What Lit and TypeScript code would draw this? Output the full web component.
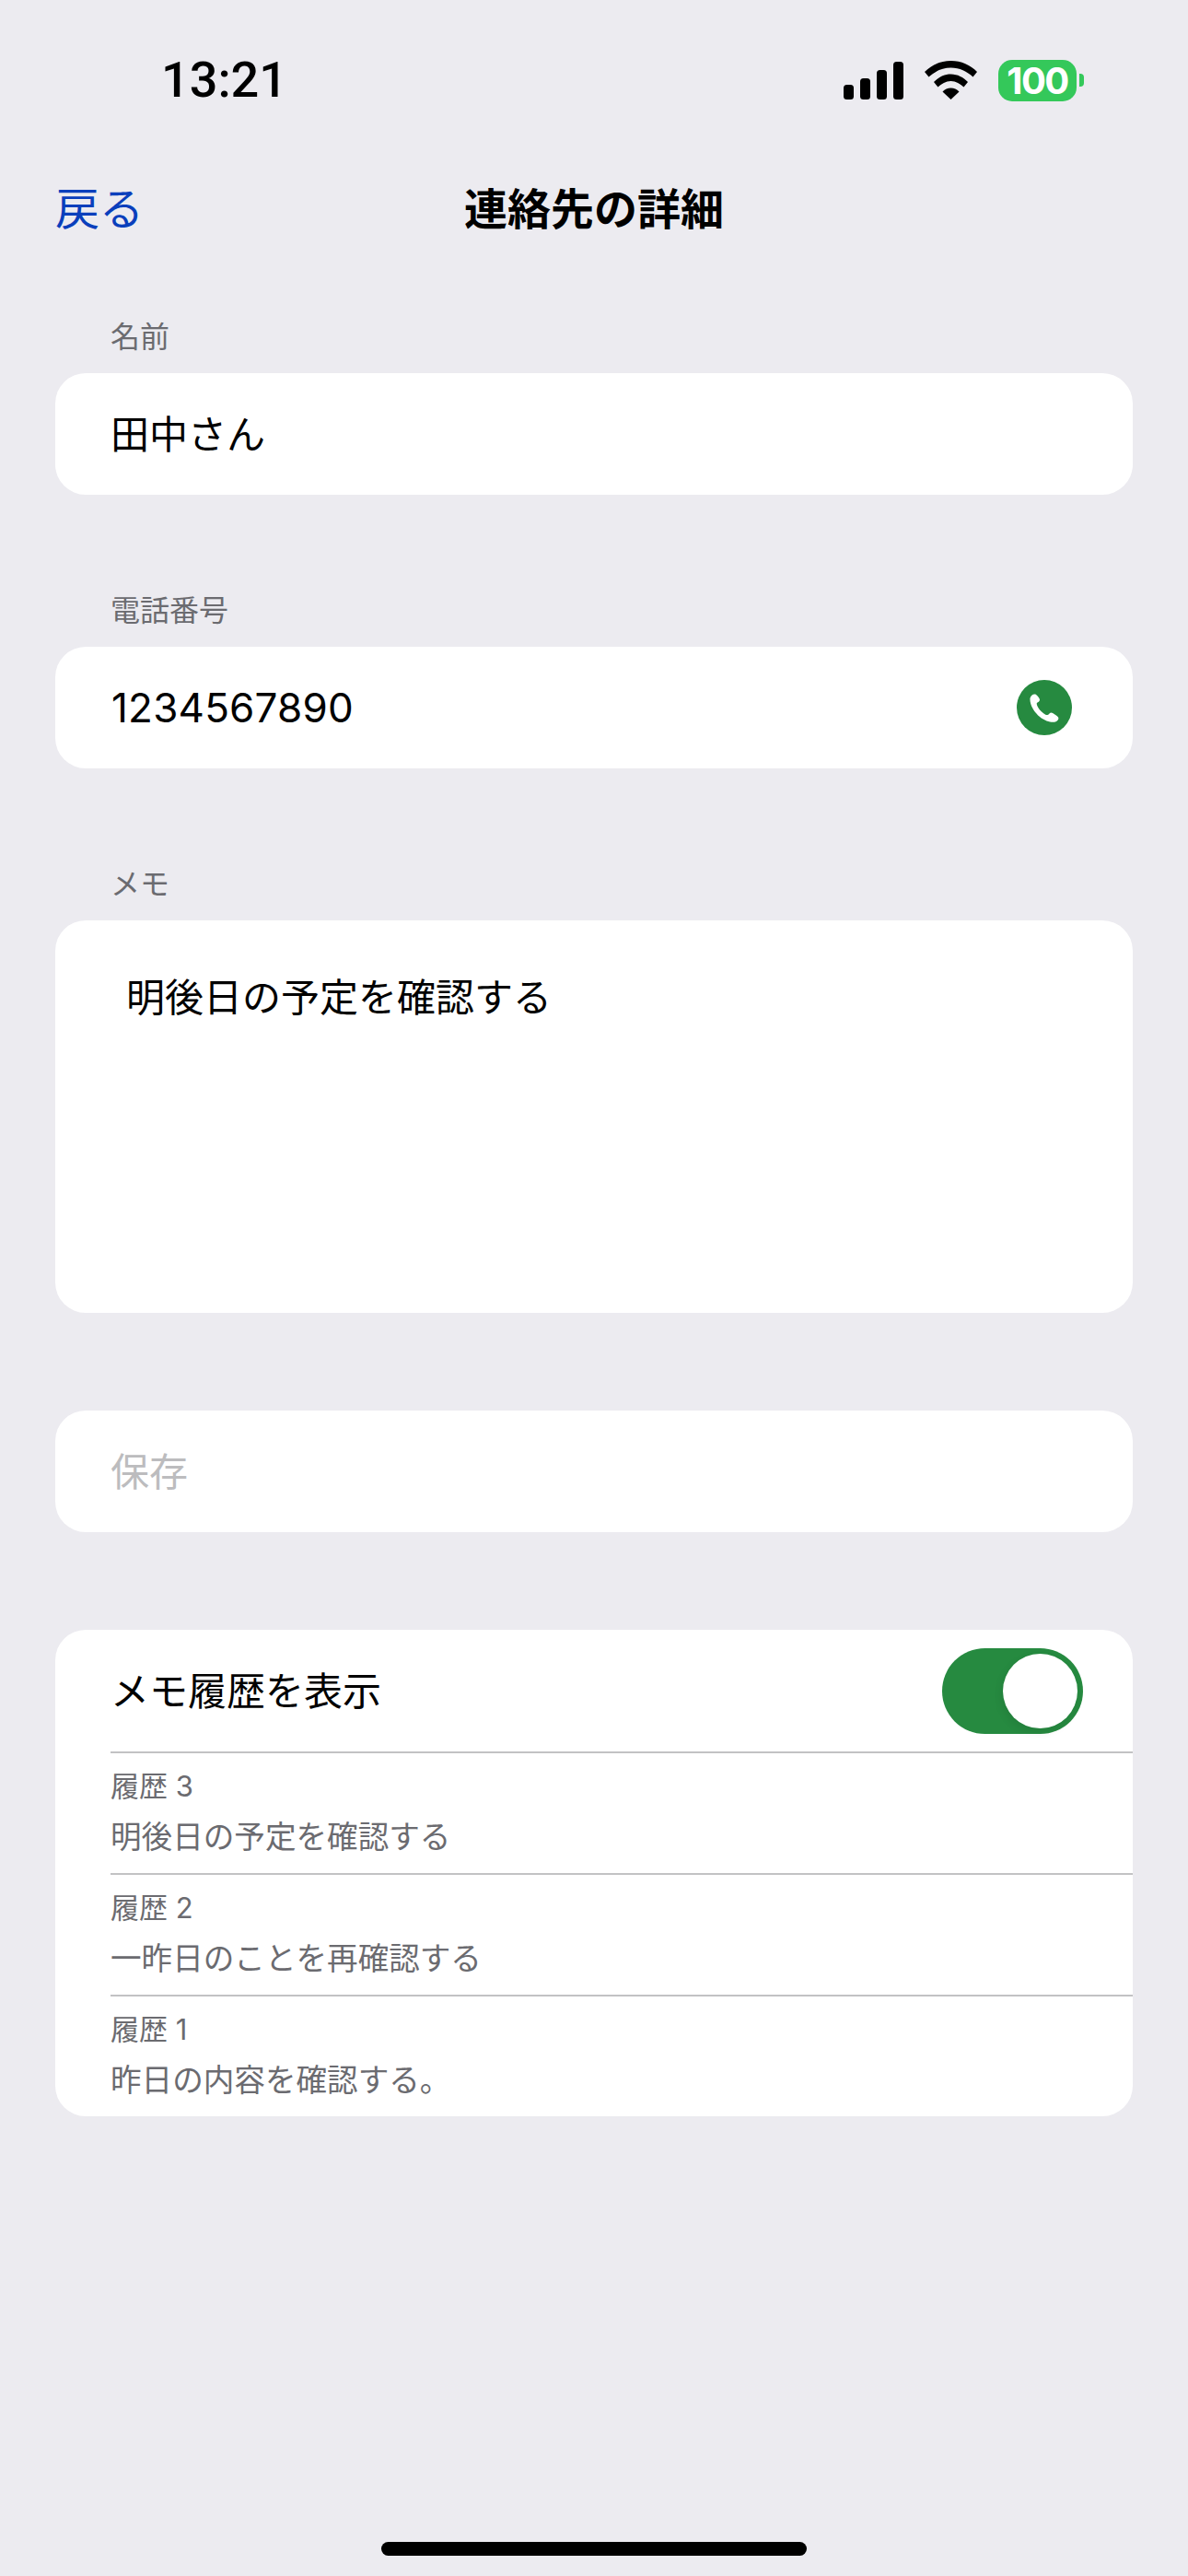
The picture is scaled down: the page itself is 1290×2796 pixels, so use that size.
import { LitElement, html, css, svg } from 'lit';
import { customElement, property } from 'lit/decorators.js';

interface HistoryEntry {
    title: string;
    body: string;
}

const HISTORY: HistoryEntry[] = [
    { title: '履歴 3', body: '明後日の予定を確認する' },
    { title: '履歴 2', body: '一昨日のことを再確認する' },
    { title: '履歴 1', body: '昨日の内容を確認する。' },
];

const SIGNAL_BARS = [
    { x: 0, y: 25, h: 16 },
    { x: 18, y: 18, h: 23 },
    { x: 36, y: 9, h: 32 },
    { x: 54, y: 0, h: 41 },
];

const signalIcon = svg`
  <svg class="signal" viewBox="0 0 65 41" width="65" height="41">
    ${SIGNAL_BARS.map(b => svg`<rect x=${b.x} y=${b.y} width="11" height=${b.h} rx="3.5" fill="#000"></rect>`)}
  </svg>`;

const wifiIcon = svg`
  <svg class="wifi" viewBox="0 0 57 42" width="57" height="42" fill="#000">
    <path d="M0 12C7.5 4.5 17 0 28.5 0S49.500 4.500 57 12L52.500 17.500C46 11.500 38 7.500 28.500 7.500S11 11.500 4.500 17.500Z"></path>
    <path d="M10 23C15 18 21 14.500 28.500 14.500S42 18 47 23L42.500 28.500C38.500 25 34 22 28.500 22S18.500 25 14.500 28.500Z"></path>
    <path d="M19.500 33.500C22 31 25 29.500 28.500 29.500S35 31 37.500 33.500L28.500 42Z"></path>
  </svg>`;

const phoneIcon = svg`
  <svg class="call" viewBox="0 0 60 60" width="60" height="60">
    <circle cx="30" cy="30" r="30" fill="#268a40"></circle>
    <path fill="#fff" d="M20 15.500C18 15 15 17 14.500 20C14 27 19 35 25 40C31 45 38 46.500 42 45.500C45 44.500 46 42 45 40.500C44 39 39 35.500 37.500 35.500C36 35.500 35 37.500 33.500 38C31 38.500 27 34.500 25 32.500C23 30 21 26 22 25C23 24 25 23.500 25 21.500C25 20 22 16 20 15.500Z"></path>
  </svg>`;

@customElement('app-root')
export class AppRoot extends LitElement {
    static override styles = css`
    :host {
      display: block;
      width: 1290px;
      height: 2796px;
      background: #ecebf0;
      color: #000;
      font-family: Inter, "Noto Sans CJK JP", sans-serif;
    }
    .screen {
      display: flex;
      flex-direction: column;
      height: 100%;
      box-sizing: border-box;
    }

    /* status bar */
    .status {
      display: flex;
      align-items: center;
      justify-content: space-between;
      height: 174px;
      padding: 0 113px 0 175px;
      flex: none;
    }
    .time {
      font-family: Roboto, sans-serif;
      font-weight: 500;
      font-size: 54px;
      line-height: 60px;
    }
    .indicators {
      display: flex;
      align-items: center;
    }
    .signal { margin-right: 23px; }
    .wifi { margin-right: 23px; }
    .battery {
      display: flex;
      align-items: center;
      justify-content: center;
      width: 85px;
      height: 45px;
      border-radius: 15px;
      background: #34c85a;
      color: #fff;
      font-family: Inter, sans-serif;
      font-weight: 700;
      font-size: 40px;
      letter-spacing: -1.5px;
      line-height: 45px;
    }
    .battery-nub {
      width: 5px;
      height: 14px;
      margin-left: 3px;
      border-radius: 0 4px 4px 0;
      background: #34c85a;
    }

    /* nav */
    .nav {
      display: grid;
      grid-template-columns: 1fr auto 1fr;
      align-items: center;
      height: 106px;
      padding: 0 60px;
      flex: none;
    }
    .back {
      font-size: 48px;
      line-height: 60px;
      color: #0a3fbc;
    }
    .title {
      font-size: 47px;
      font-weight: 600;
      line-height: 60px;
    }

    /* form */
    .form {
      padding: 0 60px;
    }
    .label {
      margin: 0 0 19px 60px;
      font-size: 32px;
      line-height: 40px;
      color: #6b6b70;
    }
    .section { margin-bottom: 106px; }
    .section:first-child { padding-top: 66px; }
    .card {
      background: #fff;
      border-radius: 33px;
    }
    .field {
      display: flex;
      align-items: center;
      justify-content: space-between;
      height: 132px;
      padding: 0 66px 0 60px;
      font-size: 42px;
    }
    .text { margin-bottom: 6px; }
    .number {
      margin-left: 1px;
      font-size: 44px;
      letter-spacing: 0.2px;
    }
    .memo {
      height: 426px;
      box-sizing: border-box;
      padding: 54px 77px;
      font-size: 42px;
      line-height: 60px;
    }
    .save {
      color: #bcbcbe;
      margin-bottom: 106px;
    }

    /* history */
    .history-head {
      display: flex;
      align-items: center;
      justify-content: space-between;
      height: 132px;
      padding: 0 54px 0 60px;
      font-size: 42px;
    }
    .toggle {
      display: flex;
      justify-content: flex-end;
      align-items: center;
      width: 153px;
      height: 93px;
      box-sizing: border-box;
      padding: 0 6px;
      border-radius: 47px;
      background: #268a40;
    }
    .knob {
      width: 81px;
      height: 81px;
      border-radius: 50%;
      background: #fff;
      box-shadow: -2px 4px 10px rgba(0, 0, 0, 0.08);
    }
    .entry {
      margin-left: 60px;
      height: 132px;
      box-sizing: border-box;
      border-top: 2px solid #c2c2c4;
      padding-top: 16px;
      color: #6b6b70;
    }
    .entry-title {
      font-size: 31px;
      line-height: 40px;
    }
    .entry-body {
      font-size: 33.6px;
      line-height: 70px;
    }

    .home-bar {
      width: 462px;
      height: 15px;
      margin: auto auto 22px;
      border-radius: 8px;
      background: #000;
      flex: none;
    }
  `;

    @property({ type: Array })
    history: HistoryEntry[] = HISTORY;

    override render() {
        return html`
      <div class="screen">
        <div class="status">
          <span class="time">13:21</span>
          <div class="indicators">
            ${signalIcon}
            ${wifiIcon}
            <div class="battery">100</div>
            <div class="battery-nub"></div>
          </div>
        </div>

        <div class="nav">
          <span class="back">戻る</span>
          <span class="title">連絡先の詳細</span>
          <span></span>
        </div>

        <div class="form">
          <div class="section">
            <div class="label">名前</div>
            <div class="card field"><span class="text">田中さん</span></div>
          </div>
          <div class="section">
            <div class="label">電話番号</div>
            <div class="card field">
              <span class="number">1234567890</span>
              ${phoneIcon}
            </div>
          </div>
          <div class="section">
            <div class="label">メモ</div>
            <div class="card memo">明後日の予定を確認する</div>
          </div>
          <div class="card field save"><span class="text">保存</span></div>
          <div class="card">
            <div class="history-head">
              <span class="text">メモ履歴を表示</span>
              <div class="toggle"><div class="knob"></div></div>
            </div>
            ${this.history.map(entry => html`
              <div class="entry">
                <div class="entry-title">${entry.title}</div>
                <div class="entry-body">${entry.body}</div>
              </div>
            `)}
          </div>
        </div>

        <div class="home-bar"></div>
      </div>
    `;
    }
}

// Ensures TypeScript treats this as a module
export { };
